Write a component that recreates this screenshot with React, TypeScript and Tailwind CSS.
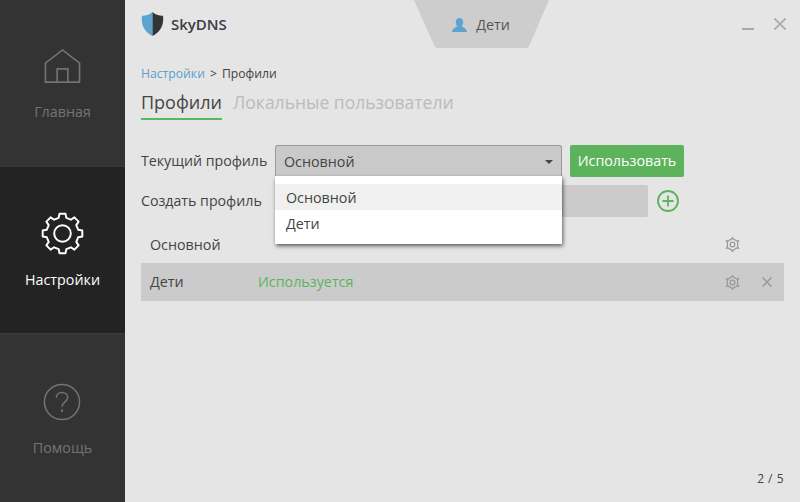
const font = { fontFamily: '"Open Sans", sans-serif' };

// eight short teeth round a ring, like the app's settings icon
const gearPath = (cx: number, cy: number, outer: number, inner: number) => {
  const pts: string[] = [];
  for (let i = 0; i < 8; i++) {
    const a = (i * Math.PI) / 4 - Math.PI / 2;
    [
      [inner, -0.24],
      [outer, -0.15],
      [outer, 0.15],
      [inner, 0.24],
    ].forEach(([r, d]) => {
      pts.push(`${(cx + r * Math.cos(a + d)).toFixed(2)} ${(cy + r * Math.sin(a + d)).toFixed(2)}`);
    });
  }
  return `M${pts.join("L")}Z`;
};

const Gear = () => (
  <svg viewBox="0 0 44 44" className="w-[43px] h-[43px] -ml-px text-white" fill="none" stroke="currentColor">
    <path strokeWidth="2" strokeLinejoin="round" d={gearPath(22, 22, 20.5, 16.5)} />
    <circle cx="22" cy="22" r="8.500" strokeWidth="2" />
  </svg>
);

const SmallGear = () => (
  <svg viewBox="0 0 16 16" className="w-[15px] h-[15px] text-[#999]" fill="none" stroke="currentColor">
    <path strokeWidth="1.300" d="M8 1.500l5.500 3.200v6.600L8 14.500l-5.500-3.200V4.700z" />
    <circle cx="8" cy="8" r="2.500" strokeWidth="1.300" />
    <path strokeWidth="1.500" d="M8 0v1.500M8 14.500V16M1 3.500l1.500 1.200M15 3.500l-1.500 1.200M1 12.500l1.500-1.200M15 12.500l-1.500-1.200" />
  </svg>
);

const Logo = () => (
  <svg viewBox="0 0 24 26" className="w-[23px] h-[26px]">
    <path fill="#5ba4cf" d="M12 0.500C10 3 5 4.500 1 4.500c-1 9 2 17 11 21z" />
    <path fill="#333438" d="M12 0.500C14 3 19 4.500 23 4.500c1 9-2 17-11 21z" />
  </svg>
);

const App = () => {
  return (
    <div style={font} className="w-[800px] h-[502px] flex bg-[#e5e5e5] overflow-hidden text-[14.3px] text-[#444]">
      <nav className="w-[125px] shrink-0 flex flex-col bg-[#333]">
        <div className="h-[166px] flex flex-col items-center pt-[48px] text-[#737373]">
          <svg viewBox="0 0 38 36" className="w-[37px] h-[36px] -ml-px" fill="none" stroke="currentColor" strokeWidth="1.700">
            <path d="M1.500 34.500V15L19 1.500 36.500 15v19.500z" />
            <path d="M13.500 34.500V21h11v13.500" />
          </svg>
          <span className="mt-[17px]">Главная</span>
        </div>
        <div className="h-[168px] flex flex-col items-center pt-[45px] bg-[#232323] border-y border-[#3a3a3a] text-white">
          <Gear />
          <span className="mt-[14px]">Настройки</span>
        </div>
        <div className="flex-1 flex flex-col items-center pt-[49px] text-[#737373]">
          <svg viewBox="0 0 40 40" className="w-[38px] h-[38px] -ml-px" fill="none" stroke="currentColor" strokeWidth="1.600">
            <circle cx="20" cy="20" r="18.500" />
            <path d="M14 15.500c0-3.500 2.700-5.500 6-5.500s6 2 6 5.200c0 4.500-6 4.800-6 9.800" />
            <path d="M20 28v2.500" strokeWidth="2" />
          </svg>
          <span className="mt-[16px]">Помощь</span>
        </div>
      </nav>

      <main className="flex-1 flex flex-col relative px-4 min-w-0">
        <header className="h-[48px] flex items-center justify-between shrink-0">
          <div className="flex items-center gap-[7px] -mt-[1px]">
            <Logo />
            <span className="text-[15px] font-semibold text-[#3c3d44] mt-[1px]">SkyDNS</span>
          </div>
          <div className="flex items-center gap-[20px] mr-[-2px]">
            <span className="w-[12px] h-[2px] bg-[#a8a8a8] mt-[10px]" />
            <svg viewBox="0 0 12 12" className="w-[12px] h-[12px]" stroke="#a8a8a8" strokeWidth="1.600">
              <path d="M0.500 0.500l11 11M11.500 0.500l-11 11" />
            </svg>
          </div>
        </header>

        <div className="absolute left-[289px] top-0 w-[135px] h-[48px]">
          <svg viewBox="0 0 135 48" className="absolute inset-0 w-full h-full">
            <path fill="#cdcdcd" d="M0 0H135L115.500 45C114.800 47 113.500 48 111.500 48H24C22 48 20.700 47 20 45Z" />
          </svg>
          <div className="relative h-full flex items-center justify-center gap-[9px] text-[#555] pr-[1px] pt-[1px]">
            <svg viewBox="0 0 15 14" className="w-[15px] h-[14px]">
              <path fill="#5ba4cf" d="M7.500 0C5 0 3.800 2 3.800 4.200c0 2 .8 3.500 1.700 4.300C3.500 9.300.5 10.300 0 14h15c-.5-3.700-3.500-4.700-5.500-5.500.9-.8 1.700-2.300 1.700-4.300C11.200 2 10 0 7.500 0z" />
            </svg>
            <span>Дети</span>
          </div>
        </div>

        <div className="mt-[17px] flex gap-[5px] text-[12.200px] leading-[17px] text-[#444]">
          <span className="text-[#5ba0cc]">Настройки</span>
          <span>&gt;</span>
          <span>Профили</span>
        </div>

        <div className="mt-[8px] flex gap-[11px] text-[18px] leading-[25px]">
          <span className="pb-[3px] border-b-2 border-[#5cb85c] text-[#444]">Профили</span>
          <span className="text-[17.500px] text-[#bbb]">Локальные пользователи</span>
        </div>

        <div className="mt-[25px] flex items-center">
          <span className="w-[134px] shrink-0 text-[14.200px]">Текущий профиль</span>
          <div className="relative w-[287px] h-[32px] flex items-center justify-between pl-2 pr-[8px] bg-[#c9c9c9] border border-[#999] border-b-0 rounded-t-[3px]">
            <span>Основной</span>
            <span className="w-0 h-0 border-x-[4px] border-x-transparent border-t-[4px] border-t-[#444]" />
            <div className="absolute z-10 -left-px top-[30px] w-[287px] h-[68px] py-2 bg-white shadow-[1px_2px_4px_rgba(0,0,0,0.6)]">
              <div className="h-[26px] pl-[11px] pt-px flex items-center bg-[#f0f0f0]">Основной</div>
              <div className="h-[26px] pl-[11px] pt-px flex items-center">Дети</div>
            </div>
          </div>
          <button className="ml-2 w-[114px] h-[32px] bg-[#5cb35c] text-white rounded-[2px]">Использовать</button>
        </div>

        <div className="mt-2 flex items-center">
          <span className="w-[134px] shrink-0 text-[14.200px]">Создать профиль</span>
          <div className="w-[373px] h-[32px] bg-[#cbcbcb] rounded-[2px]" />
          <svg viewBox="0 0 22 22" className="ml-[9px] w-[22px] h-[22px]" fill="none" stroke="#5cb35c">
            <circle cx="11" cy="11" r="10" strokeWidth="1.800" />
            <path d="M11 5.500v11M5.500 11h11" strokeWidth="1.800" />
          </svg>
        </div>

        <div className="mt-[9px] h-[37px] flex items-center pl-[9px]">
          <span className="w-[108px]">Основной</span>
          <span className="ml-auto mr-[44px] flex"><SmallGear /></span>
        </div>
        <div className="h-[38px] flex items-center pl-[9px] bg-[#cbcbcb]">
          <span className="w-[108px]">Дети</span>
          <span className="text-[#5cb35c]">Используется</span>
          <span className="ml-auto mr-[44px] flex"><SmallGear /></span>
          <svg viewBox="0 0 10 10" className="absolute right-[28px] w-[10px] h-[10px]" stroke="#999" strokeWidth="1.500">
            <path d="M0.500 0.500l9 9M9.500 0.500l-9 9" />
          </svg>
        </div>

        <div className="mt-auto mb-[15px] text-right text-[12px] leading-[17px] tracking-[0.5px]">2 / 5</div>
      </main>
    </div>
  );
};

export default App;
